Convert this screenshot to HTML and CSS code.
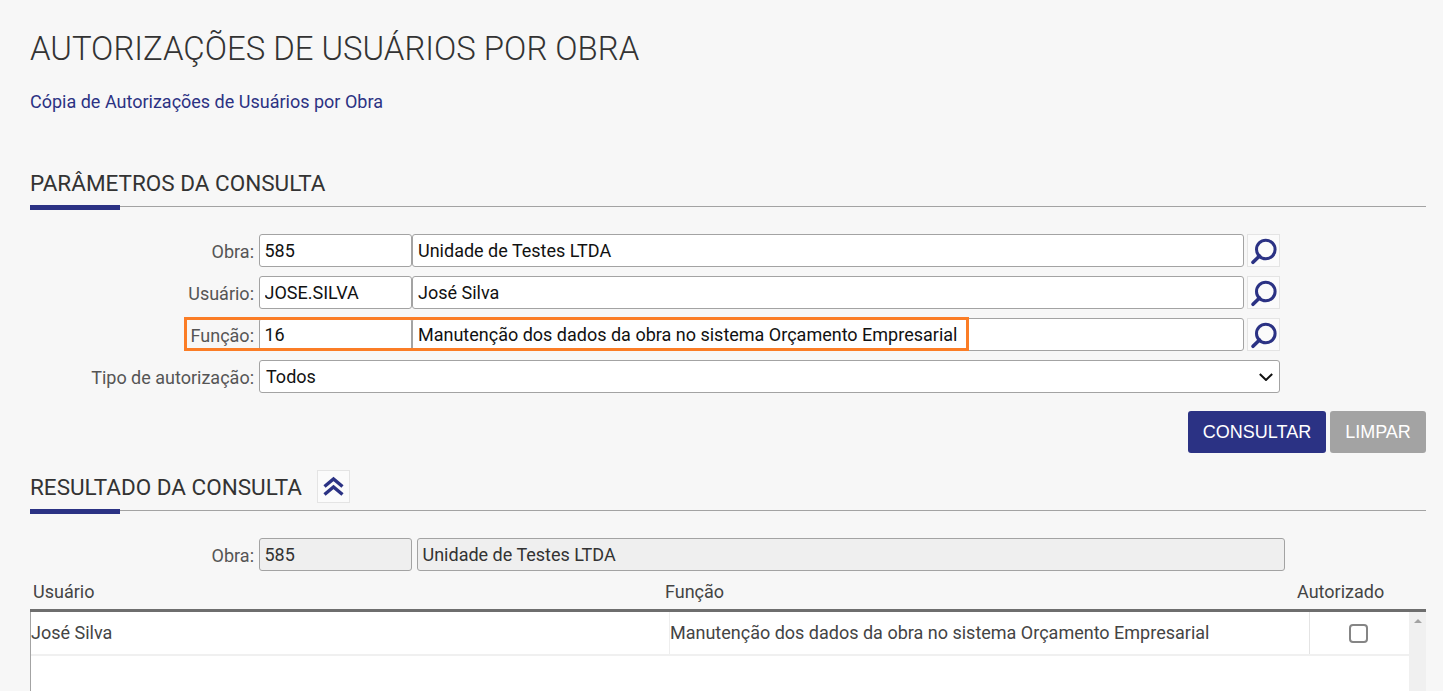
FILE: index.html
```html
<!DOCTYPE html>
<html lang="pt-BR">
<head>
<meta charset="utf-8">
<title>Autorizações de Usuários por Obra</title>
<link rel="stylesheet" href="styles.css">
</head>
<body>
<main class="page">
  <h1 class="title">AUTORIZAÇÕES DE USUÁRIOS POR OBRA</h1>
  <a class="link" href="#">Cópia de Autorizações de Usuários por Obra</a>

  <section class="section params">
    <header class="section-head"><h2>PARÂMETROS DA CONSULTA</h2></header>
    <form class="form">
      <div class="row">
        <label class="label">Obra:</label>
        <input class="field code" value="585">
        <input class="field desc" value="Unidade de Testes LTDA">
        <button type="button" class="icon-btn" aria-label="Pesquisar"><svg viewBox="0 0 33 33" width="33" height="33"><circle cx="18.800" cy="15.500" r="9.300" fill="none" stroke="#2b3284" stroke-width="3"/><path d="M12.500 22 6 28.300" stroke="#2b3284" stroke-width="3.600" stroke-linecap="round"/></svg></button>
      </div>
      <div class="row">
        <label class="label">Usuário:</label>
        <input class="field code" value="JOSE.SILVA">
        <input class="field desc" value="José Silva">
        <button type="button" class="icon-btn" aria-label="Pesquisar"><svg viewBox="0 0 33 33" width="33" height="33"><circle cx="18.800" cy="15.500" r="9.300" fill="none" stroke="#2b3284" stroke-width="3"/><path d="M12.500 22 6 28.300" stroke="#2b3284" stroke-width="3.600" stroke-linecap="round"/></svg></button>
      </div>
      <div class="row">
        <label class="label">Função:</label>
        <input class="field code" value="16">
        <input class="field desc" value="Manutenção dos dados da obra no sistema Orçamento Empresarial">
        <button type="button" class="icon-btn" aria-label="Pesquisar"><svg viewBox="0 0 33 33" width="33" height="33"><circle cx="18.800" cy="15.500" r="9.300" fill="none" stroke="#2b3284" stroke-width="3"/><path d="M12.500 22 6 28.300" stroke="#2b3284" stroke-width="3.600" stroke-linecap="round"/></svg></button>
        <span class="highlight"></span>
      </div>
      <div class="row">
        <label class="label">Tipo de autorização:</label>
        <div class="select">
          <span>Todos</span>
          <svg viewBox="0 0 14 8" width="14" height="8"><path d="M.8 1 7 7l6.200-6" fill="none" stroke="#111" stroke-width="2"/></svg>
        </div>
      </div>
      <div class="actions">
        <button type="button" class="btn primary">CONSULTAR</button>
        <button type="button" class="btn muted">LIMPAR</button>
      </div>
    </form>
  </section>

  <section class="section results">
    <header class="section-head">
      <h2>RESULTADO DA CONSULTA</h2>
      <button type="button" class="icon-btn collapse" aria-label="Recolher"><svg viewBox="0 0 33 33" width="33" height="33"><path d="M7.500 16.500 16.500 9l9 7.500M7.500 24.500l9-7.500 9 7.500" fill="none" stroke="#2b3284" stroke-width="3.400"/></svg></button>
    </header>
    <div class="row readonly-row">
      <label class="label">Obra:</label>
      <input class="field code readonly" value="585" readonly>
      <input class="field desc readonly" value="Unidade de Testes LTDA" readonly>
    </div>
    <div class="table-head">
      <span class="col-user">Usuário</span>
      <span class="col-func">Função</span>
      <span class="col-auth">Autorizado</span>
    </div>
    <div class="table-body">
      <div class="rows">
        <div class="data-row">
          <div class="cell c-user">José Silva</div>
          <div class="cell c-func">Manutenção dos dados da obra no sistema Orçamento Empresarial</div>
          <div class="cell c-auth"><span class="check"></span></div>
        </div>
      </div>
      <div class="scrollbar"><span class="arrow"></span></div>
    </div>
  </section>
</main>
</body>
</html>
```
FILE: styles.css
```css
* { box-sizing: border-box; }
html, body { margin: 0; height: 100%; }
body {
  background: #f7f7f7;
  font-family: Roboto, "Liberation Sans", sans-serif;
  font-size: 18px;
  color: #333;
  overflow: hidden;
}
.page { padding: 0 17px 0 30px; height: 691px; overflow: hidden; }
.title {
  margin: 0;
  padding-top: 30px;
  font-size: 32.9px;
  line-height: 38px;
  font-weight: 300;
  color: #333;
}
.link {
  display: block;
  margin-top: 23px;
  line-height: 22px;
  color: #2c3283;
  text-decoration: none;
}
.section-head {
  display: flex;
  align-items: center;
  gap: 15px;
  height: 41px;
  padding-bottom: 7px;
  border-bottom: 1px solid #a3a3a3;
  position: relative;
}
.section-head::after {
  content: "";
  position: absolute;
  left: 0;
  bottom: -4px;
  width: 90px;
  height: 5px;
  background: #2b3284;
}
.section-head h2 {
  margin: 0;
  font-size: 22.5px;
  font-weight: 400;
  line-height: 26px;
  color: #333;
}
.params { margin-top: 53px; }
.form { padding-top: 27px; }
.row {
  display: flex;
  align-items: stretch;
  height: 33px;
  margin-bottom: 9px;
  position: relative;
}
.label {
  width: 229px;
  padding-right: 5px;
  text-align: right;
  line-height: 35px;
  color: #555;
  flex: none;
}
.field {
  height: 33px;
  border: 1px solid #a3a3a3;
  border-radius: 3px;
  background: #fff;
  padding: 0 5px;
  font: 18px Roboto, "Liberation Sans", sans-serif;
  color: #111;
  outline: none;
  flex: none;
}
.code { width: 153px; padding-left: 4.500px; }
.desc { width: 832px; }
.icon-btn {
  width: 33px;
  height: 33px;
  padding: 0;
  margin-left: 3px;
  border: 1px solid #e4e4e4;
  background: #fbfbfb;
  flex: none;
  display: flex;
  align-items: center;
  justify-content: center;
}
.icon-btn svg { flex: none; margin: -1px; }
.highlight {
  position: absolute;
  left: 154px;
  top: -1px;
  width: 785px;
  height: 34px;
  border: 3px solid #fb7d26;
  pointer-events: none;
}
.select {
  width: 1021px;
  height: 33px;
  border: 1px solid #a3a3a3;
  border-radius: 3px;
  background: #fff;
  padding: 0 6px 0 6px;
  display: flex;
  align-items: center;
  justify-content: space-between;
  color: #111;
  line-height: 1;
  flex: none;
}
.actions {
  display: flex;
  justify-content: flex-end;
  gap: 4px;
  margin-top: 18px;
}
.btn {
  height: 42px;
  border: 0;
  border-radius: 3px;
  color: #fff;
  font: 18px "Liberation Sans", Arial, sans-serif;
}
.primary { width: 138px; background: #2b3284; }
.muted { width: 96px; background: #a3a3a3; }
.results { margin-top: 17px; }
.collapse { margin-left: 0; }
.readonly-row { margin-top: 27px; margin-bottom: 0; }
.readonly { background: #efefef; color: #333; }
.readonly.desc { margin-left: 5px; width: 868px; padding-left: 4.500px; }
.table-head {
  position: relative;
  height: 41px;
  border-bottom: 3px solid #6e6e6e;
  line-height: 42px;
  display: flex;
  color: #444;
}
.col-user { margin-left: 3px; width: 632px; flex: none; }
.col-func { width: 632px; flex: none; }
.col-auth { flex: none; }
.table-body {
  display: flex;
  height: 120px;
}
.rows {
  width: 1379px;
  background: #fff;
  border-left: 1px solid #a3a3a3;
  flex: none;
}
.data-row {
  display: flex;
  height: 44px;
  border-bottom: 2px solid #f0f0f0;
}
.cell { line-height: 42px; color: #444; flex: none; }
.c-user { width: 638px; }
.c-func { width: 641px; border-left: 1px solid #eee; border-right: 1px solid #e4e4e4; }
.c-auth {
  width: 99px;
  padding-right: 2px;
  display: flex;
  align-items: center;
  justify-content: center;
}
.check {
  width: 19px;
  height: 19px;
  border: 2px solid #858585;
  border-radius: 4px;
  background: #fff;
}
.scrollbar {
  width: 17px;
  background: #f0f0f0;
  position: relative;
  flex: none;
}
.arrow {
  position: absolute;
  top: 7px;
  left: 5px;
  border-left: 4px solid transparent;
  border-right: 4px solid transparent;
  border-bottom: 4px solid #a3a3a3;
}
```
